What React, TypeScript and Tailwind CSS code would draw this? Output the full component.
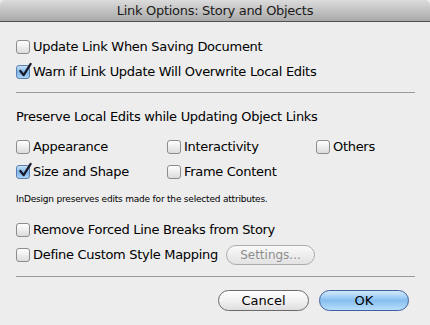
import React from 'react';

const font = { fontFamily: '"DejaVu Sans", "Liberation Sans", sans-serif' };

const Box: React.FC<{ checked?: boolean }> = ({ checked }) => (
  <span
    className={
      'relative inline-block w-[14px] h-[14px] shrink-0 rounded-[3px] border ' +
      (checked
        ? 'border-[#5a7fb0] bg-gradient-to-b from-[#c9e2f8] via-[#7fb4e8] to-[#a9d2f6]'
        : 'border-[#8c8c8c] bg-gradient-to-b from-[#ffffff] to-[#dcdcdc]')
    }
  >
    {checked && (
      <svg viewBox="0 0 16 16" className="absolute left-[1px] top-[-4px] w-[15px] h-[16px]">
        <path d="M2.5 9 L6 13.5 L13.5 1.5" fill="none" stroke="#1a1a2a" strokeWidth="2.4" strokeLinecap="round" strokeLinejoin="round" />
      </svg>
    )}
  </span>
);

const Check: React.FC<{ label: string; checked?: boolean }> = ({ label, checked }) => (
  <label className="flex items-center gap-[3px] h-[16px] text-[13px] leading-[16px] tracking-[-0.3px] text-black">
    <Box checked={checked} />
    <span>{label}</span>
  </label>
);

const App: React.FC = () => {
  return (
    <div className="w-[430px] h-[325px] bg-[#ededed] flex flex-col overflow-hidden" style={font}>
      {/* title bar */}
      <div className="h-[22px] shrink-0 rounded-t-[5px] bg-gradient-to-b from-[#dcdcdc] to-[#a9a9a9] border-b border-[#505050] flex items-center justify-center text-[13px] leading-[16px] tracking-[-0.3px] text-[#1a1a1a]">
        Link Options: Story and Objects
      </div>

      <div className="flex flex-col px-[16px]">
        <div className="flex flex-col gap-[9px] pt-[17px]">
          <Check label="Update Link When Saving Document" />
          <Check label="Warn if Link Update Will Overwrite Local Edits" checked />
        </div>

        <div className="mt-[12px] h-px bg-[#9a9a9a] w-[399px]" />

        <div className="mt-[16px] text-[13px] leading-[16px] tracking-[-0.3px] text-black">
          Preserve Local Edits while Updating Object Links
        </div>

        <div className="mt-[14px] grid grid-cols-[151px_149px_1fr] gap-y-[9px]">
          <Check label="Appearance" />
          <Check label="Interactivity" />
          <Check label="Others" />
          <Check label="Size and Shape" checked />
          <Check label="Frame Content" />
        </div>

        <div className="mt-[13px] text-[9px] leading-[12px] tracking-[-0.2px] text-black">
          InDesign preserves edits made for the selected attributes.
        </div>

        <div className="flex flex-col gap-[7px] pt-[17px]">
          <Check label="Remove Forced Line Breaks from Story" />
          <div className="flex items-center gap-[8px] h-[20px]">
            <Check label="Define Custom Style Mapping" />
            <button className="h-[20px] w-[89px] rounded-full border border-[#acacac] bg-gradient-to-b from-[#fafafa] to-[#e2e2e2] text-[12px] leading-[16px] text-[#8e8e8e]">
              Settings...
            </button>
          </div>
        </div>

        <div className="mt-[11px] h-px bg-[#9a9a9a] w-[399px]" />

        <div className="mt-[13px] flex justify-end gap-[10px] pr-[5px]">
          <button className="h-[21px] w-[91px] rounded-full border border-[#6a6a6a] bg-gradient-to-b from-[#ffffff] via-[#f2f2f2] to-[#dedede] text-[13px] leading-[16px] text-black">
            Cancel
          </button>
          <button className="h-[21px] w-[90px] rounded-full border border-[#3c5fa0] bg-gradient-to-b from-[#d4eafc] via-[#86bff0] to-[#b8defb] text-[13px] leading-[16px] text-black">
            OK
          </button>
        </div>
      </div>
    </div>
  );
};

export default App;
